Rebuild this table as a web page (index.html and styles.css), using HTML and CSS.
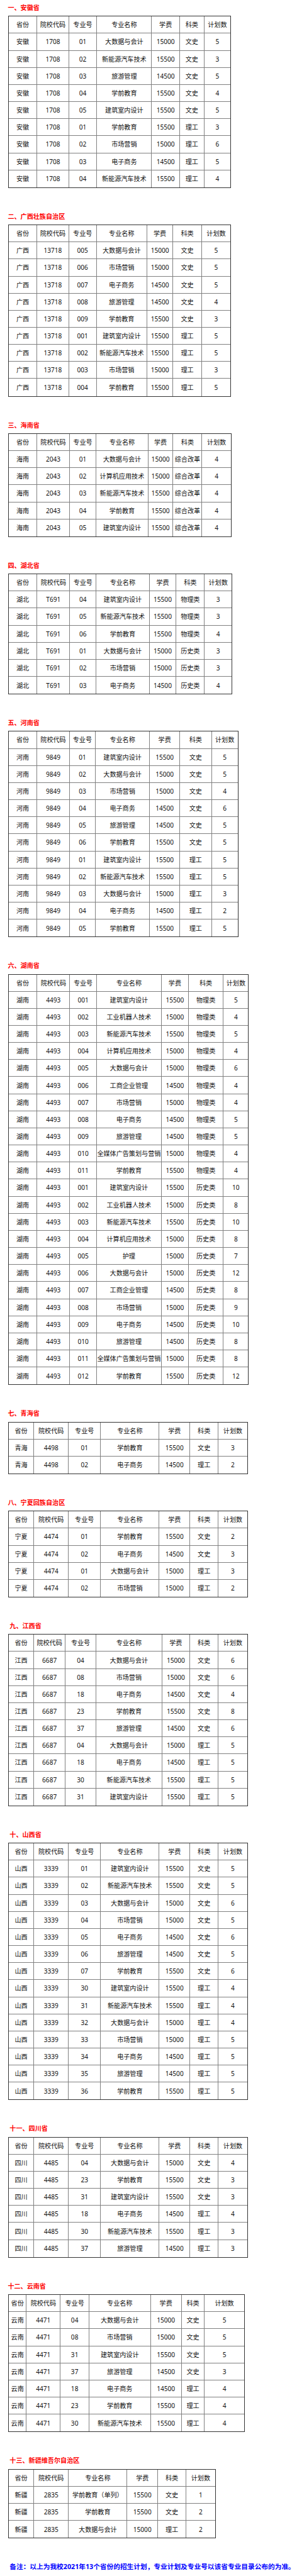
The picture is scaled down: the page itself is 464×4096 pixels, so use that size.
FILE: index.html
```html
<!DOCTYPE html>
<html lang="zh-CN">
<head>
<meta charset="utf-8">
<title>2021年招生计划</title>
<link rel="stylesheet" href="styles.css">
</head>
<body>

<section class="section">
<h2 class="title">一、安徽省</h2>
<table class="plan tA">
<colgroup><col><col><col><col><col><col><col></colgroup>
<thead><tr><th>省份</th><th>院校代码</th><th>专业号</th><th>专业名称</th><th>学费</th><th>科类</th><th>计划数</th></tr></thead>
<tbody>
<tr><td>安徽</td><td>1708</td><td>01</td><td>大数据与会计</td><td>15000</td><td>文史</td><td>5</td></tr>
<tr><td>安徽</td><td>1708</td><td>02</td><td>新能源汽车技术</td><td>15500</td><td>文史</td><td>3</td></tr>
<tr><td>安徽</td><td>1708</td><td>03</td><td>旅游管理</td><td>14500</td><td>文史</td><td>5</td></tr>
<tr><td>安徽</td><td>1708</td><td>04</td><td>学前教育</td><td>15500</td><td>文史</td><td>4</td></tr>
<tr><td>安徽</td><td>1708</td><td>05</td><td>建筑室内设计</td><td>15500</td><td>文史</td><td>5</td></tr>
<tr><td>安徽</td><td>1708</td><td>01</td><td>学前教育</td><td>15500</td><td>理工</td><td>3</td></tr>
<tr><td>安徽</td><td>1708</td><td>02</td><td>市场营销</td><td>15000</td><td>理工</td><td>6</td></tr>
<tr><td>安徽</td><td>1708</td><td>03</td><td>电子商务</td><td>14500</td><td>理工</td><td>5</td></tr>
<tr><td>安徽</td><td>1708</td><td>04</td><td>新能源汽车技术</td><td>15500</td><td>理工</td><td>4</td></tr>
</tbody>
</table>
</section>

<section class="section">
<h2 class="title">二、广西壮族自治区</h2>
<table class="plan tB">
<colgroup><col><col><col><col><col><col><col></colgroup>
<thead><tr><th>省份</th><th>院校代码</th><th>专业号</th><th>专业名称</th><th>学费</th><th>科类</th><th>计划数</th></tr></thead>
<tbody>
<tr><td>广西</td><td>13718</td><td>005</td><td>大数据与会计</td><td>15000</td><td>文史</td><td>5</td></tr>
<tr><td>广西</td><td>13718</td><td>006</td><td>市场营销</td><td>15000</td><td>文史</td><td>5</td></tr>
<tr><td>广西</td><td>13718</td><td>007</td><td>电子商务</td><td>14500</td><td>文史</td><td>5</td></tr>
<tr><td>广西</td><td>13718</td><td>008</td><td>旅游管理</td><td>14500</td><td>文史</td><td>4</td></tr>
<tr><td>广西</td><td>13718</td><td>009</td><td>学前教育</td><td>15500</td><td>文史</td><td>3</td></tr>
<tr><td>广西</td><td>13718</td><td>001</td><td>建筑室内设计</td><td>15500</td><td>理工</td><td>5</td></tr>
<tr><td>广西</td><td>13718</td><td>002</td><td>新能源汽车技术</td><td>15500</td><td>理工</td><td>5</td></tr>
<tr><td>广西</td><td>13718</td><td>003</td><td>市场营销</td><td>15000</td><td>理工</td><td>3</td></tr>
<tr><td>广西</td><td>13718</td><td>004</td><td>学前教育</td><td>15500</td><td>理工</td><td>5</td></tr>
</tbody>
</table>
</section>

<section class="section">
<h2 class="title">三、海南省</h2>
<table class="plan tC">
<colgroup><col><col><col><col><col><col><col></colgroup>
<thead><tr><th>省份</th><th>院校代码</th><th>专业号</th><th>专业名称</th><th>学费</th><th>科类</th><th>计划数</th></tr></thead>
<tbody>
<tr><td>海南</td><td>2043</td><td>01</td><td>大数据与会计</td><td>15000</td><td>综合改革</td><td>4</td></tr>
<tr><td>海南</td><td>2043</td><td>02</td><td>计算机应用技术</td><td>15000</td><td>综合改革</td><td>4</td></tr>
<tr><td>海南</td><td>2043</td><td>03</td><td>新能源汽车技术</td><td>15500</td><td>综合改革</td><td>4</td></tr>
<tr><td>海南</td><td>2043</td><td>04</td><td>学前教育</td><td>15500</td><td>综合改革</td><td>4</td></tr>
<tr><td>海南</td><td>2043</td><td>05</td><td>建筑室内设计</td><td>15500</td><td>综合改革</td><td>4</td></tr>
</tbody>
</table>
</section>

<section class="section">
<h2 class="title">四、湖北省</h2>
<table class="plan tD">
<colgroup><col><col><col><col><col><col><col></colgroup>
<thead><tr><th>省份</th><th>院校代码</th><th>专业号</th><th>专业名称</th><th>学费</th><th>科类</th><th>计划数</th></tr></thead>
<tbody>
<tr><td>湖北</td><td>T691</td><td>04</td><td>建筑室内设计</td><td>15500</td><td>物理类</td><td>3</td></tr>
<tr><td>湖北</td><td>T691</td><td>05</td><td>新能源汽车技术</td><td>15500</td><td>物理类</td><td>3</td></tr>
<tr><td>湖北</td><td>T691</td><td>06</td><td>学前教育</td><td>15500</td><td>物理类</td><td>4</td></tr>
<tr><td>湖北</td><td>T691</td><td>01</td><td>大数据与会计</td><td>15000</td><td>历史类</td><td>3</td></tr>
<tr><td>湖北</td><td>T691</td><td>02</td><td>市场营销</td><td>15000</td><td>历史类</td><td>3</td></tr>
<tr><td>湖北</td><td>T691</td><td>03</td><td>电子商务</td><td>14500</td><td>历史类</td><td>4</td></tr>
</tbody>
</table>
</section>

<section class="section">
<h2 class="title">五、河南省</h2>
<table class="plan tE">
<colgroup><col><col><col><col><col><col><col></colgroup>
<thead><tr><th>省份</th><th>院校代码</th><th>专业号</th><th>专业名称</th><th>学费</th><th>科类</th><th>计划数</th></tr></thead>
<tbody>
<tr><td>河南</td><td>9849</td><td>01</td><td>建筑室内设计</td><td>15500</td><td>文史</td><td>5</td></tr>
<tr><td>河南</td><td>9849</td><td>02</td><td>大数据与会计</td><td>15000</td><td>文史</td><td>5</td></tr>
<tr><td>河南</td><td>9849</td><td>03</td><td>市场营销</td><td>15000</td><td>文史</td><td>4</td></tr>
<tr><td>河南</td><td>9849</td><td>04</td><td>电子商务</td><td>14500</td><td>文史</td><td>6</td></tr>
<tr><td>河南</td><td>9849</td><td>05</td><td>旅游管理</td><td>14500</td><td>文史</td><td>5</td></tr>
<tr><td>河南</td><td>9849</td><td>06</td><td>学前教育</td><td>15500</td><td>文史</td><td>5</td></tr>
<tr><td>河南</td><td>9849</td><td>01</td><td>建筑室内设计</td><td>15500</td><td>理工</td><td>5</td></tr>
<tr><td>河南</td><td>9849</td><td>02</td><td>新能源汽车技术</td><td>15500</td><td>理工</td><td>5</td></tr>
<tr><td>河南</td><td>9849</td><td>03</td><td>大数据与会计</td><td>15000</td><td>理工</td><td>3</td></tr>
<tr><td>河南</td><td>9849</td><td>04</td><td>电子商务</td><td>14500</td><td>理工</td><td>2</td></tr>
<tr><td>河南</td><td>9849</td><td>05</td><td>学前教育</td><td>15500</td><td>理工</td><td>5</td></tr>
</tbody>
</table>
</section>

<section class="section">
<h2 class="title">六、湖南省</h2>
<table class="plan tF">
<colgroup><col><col><col><col><col><col><col></colgroup>
<thead><tr><th>省份</th><th>院校代码</th><th>专业号</th><th>专业名称</th><th>学费</th><th>科类</th><th>计划数</th></tr></thead>
<tbody>
<tr><td>湖南</td><td>4493</td><td>001</td><td>建筑室内设计</td><td>15500</td><td>物理类</td><td>5</td></tr>
<tr><td>湖南</td><td>4493</td><td>002</td><td>工业机器人技术</td><td>15000</td><td>物理类</td><td>4</td></tr>
<tr><td>湖南</td><td>4493</td><td>003</td><td>新能源汽车技术</td><td>15500</td><td>物理类</td><td>5</td></tr>
<tr><td>湖南</td><td>4493</td><td>004</td><td>计算机应用技术</td><td>15000</td><td>物理类</td><td>4</td></tr>
<tr><td>湖南</td><td>4493</td><td>005</td><td>大数据与会计</td><td>15000</td><td>物理类</td><td>6</td></tr>
<tr><td>湖南</td><td>4493</td><td>006</td><td>工商企业管理</td><td>14500</td><td>物理类</td><td>4</td></tr>
<tr><td>湖南</td><td>4493</td><td>007</td><td>市场营销</td><td>15000</td><td>物理类</td><td>4</td></tr>
<tr><td>湖南</td><td>4493</td><td>008</td><td>电子商务</td><td>14500</td><td>物理类</td><td>5</td></tr>
<tr><td>湖南</td><td>4493</td><td>009</td><td>旅游管理</td><td>14500</td><td>物理类</td><td>5</td></tr>
<tr><td>湖南</td><td>4493</td><td>010</td><td>全媒体广告策划与营销</td><td>15000</td><td>物理类</td><td>4</td></tr>
<tr><td>湖南</td><td>4493</td><td>011</td><td>学前教育</td><td>15500</td><td>物理类</td><td>4</td></tr>
<tr><td>湖南</td><td>4493</td><td>001</td><td>建筑室内设计</td><td>15500</td><td>历史类</td><td>10</td></tr>
<tr><td>湖南</td><td>4493</td><td>002</td><td>工业机器人技术</td><td>15000</td><td>历史类</td><td>8</td></tr>
<tr><td>湖南</td><td>4493</td><td>003</td><td>新能源汽车技术</td><td>15500</td><td>历史类</td><td>10</td></tr>
<tr><td>湖南</td><td>4493</td><td>004</td><td>计算机应用技术</td><td>15000</td><td>历史类</td><td>8</td></tr>
<tr><td>湖南</td><td>4493</td><td>005</td><td>护理</td><td>15000</td><td>历史类</td><td>7</td></tr>
<tr><td>湖南</td><td>4493</td><td>006</td><td>大数据与会计</td><td>15000</td><td>历史类</td><td>12</td></tr>
<tr><td>湖南</td><td>4493</td><td>007</td><td>工商企业管理</td><td>14500</td><td>历史类</td><td>8</td></tr>
<tr><td>湖南</td><td>4493</td><td>008</td><td>市场营销</td><td>15000</td><td>历史类</td><td>9</td></tr>
<tr><td>湖南</td><td>4493</td><td>009</td><td>电子商务</td><td>14500</td><td>历史类</td><td>10</td></tr>
<tr><td>湖南</td><td>4493</td><td>010</td><td>旅游管理</td><td>14500</td><td>历史类</td><td>8</td></tr>
<tr><td>湖南</td><td>4493</td><td>011</td><td>全媒体广告策划与营销</td><td>15000</td><td>历史类</td><td>8</td></tr>
<tr><td>湖南</td><td>4493</td><td>012</td><td>学前教育</td><td>15500</td><td>历史类</td><td>12</td></tr>
</tbody>
</table>
</section>

<section class="section">
<h2 class="title">七、青海省</h2>
<table class="plan tG">
<colgroup><col><col><col><col><col><col><col></colgroup>
<thead><tr><th>省份</th><th>院校代码</th><th>专业号</th><th>专业名称</th><th>学费</th><th>科类</th><th>计划数</th></tr></thead>
<tbody>
<tr><td>青海</td><td>4498</td><td>01</td><td>学前教育</td><td>15500</td><td>文史</td><td>3</td></tr>
<tr><td>青海</td><td>4498</td><td>02</td><td>电子商务</td><td>14500</td><td>理工</td><td>2</td></tr>
</tbody>
</table>
</section>

<section class="section">
<h2 class="title">八、宁夏回族自治区</h2>
<table class="plan tG">
<colgroup><col><col><col><col><col><col><col></colgroup>
<thead><tr><th>省份</th><th>院校代码</th><th>专业号</th><th>专业名称</th><th>学费</th><th>科类</th><th>计划数</th></tr></thead>
<tbody>
<tr><td>宁夏</td><td>4474</td><td>01</td><td>学前教育</td><td>15500</td><td>文史</td><td>2</td></tr>
<tr><td>宁夏</td><td>4474</td><td>02</td><td>电子商务</td><td>14500</td><td>文史</td><td>3</td></tr>
<tr><td>宁夏</td><td>4474</td><td>01</td><td>大数据与会计</td><td>15000</td><td>理工</td><td>3</td></tr>
<tr><td>宁夏</td><td>4474</td><td>02</td><td>市场营销</td><td>15000</td><td>理工</td><td>2</td></tr>
</tbody>
</table>
</section>

<section class="section">
<h2 class="title indent">九、江西省</h2>
<table class="plan tH">
<colgroup><col><col><col><col><col><col><col></colgroup>
<thead><tr><th>省份</th><th>院校代码</th><th>专业号</th><th>专业名称</th><th>学费</th><th>科类</th><th>计划数</th></tr></thead>
<tbody>
<tr><td>江西</td><td>6687</td><td>04</td><td>大数据与会计</td><td>15000</td><td>文史</td><td>6</td></tr>
<tr><td>江西</td><td>6687</td><td>08</td><td>市场营销</td><td>15000</td><td>文史</td><td>6</td></tr>
<tr><td>江西</td><td>6687</td><td>18</td><td>电子商务</td><td>14500</td><td>文史</td><td>4</td></tr>
<tr><td>江西</td><td>6687</td><td>23</td><td>学前教育</td><td>15500</td><td>文史</td><td>8</td></tr>
<tr><td>江西</td><td>6687</td><td>37</td><td>旅游管理</td><td>14500</td><td>文史</td><td>6</td></tr>
<tr><td>江西</td><td>6687</td><td>04</td><td>大数据与会计</td><td>15000</td><td>理工</td><td>5</td></tr>
<tr><td>江西</td><td>6687</td><td>18</td><td>电子商务</td><td>14500</td><td>理工</td><td>5</td></tr>
<tr><td>江西</td><td>6687</td><td>30</td><td>新能源汽车技术</td><td>15500</td><td>理工</td><td>5</td></tr>
<tr><td>江西</td><td>6687</td><td>31</td><td>建筑室内设计</td><td>15500</td><td>理工</td><td>5</td></tr>
</tbody>
</table>
</section>

<section class="section">
<h2 class="title indent">十、山西省</h2>
<table class="plan tG">
<colgroup><col><col><col><col><col><col><col></colgroup>
<thead><tr><th>省份</th><th>院校代码</th><th>专业号</th><th>专业名称</th><th>学费</th><th>科类</th><th>计划数</th></tr></thead>
<tbody>
<tr><td>山西</td><td>3339</td><td>01</td><td>建筑室内设计</td><td>15500</td><td>文史</td><td>5</td></tr>
<tr><td>山西</td><td>3339</td><td>02</td><td>新能源汽车技术</td><td>15500</td><td>文史</td><td>5</td></tr>
<tr><td>山西</td><td>3339</td><td>03</td><td>大数据与会计</td><td>15000</td><td>文史</td><td>6</td></tr>
<tr><td>山西</td><td>3339</td><td>04</td><td>市场营销</td><td>15000</td><td>文史</td><td>5</td></tr>
<tr><td>山西</td><td>3339</td><td>05</td><td>电子商务</td><td>14500</td><td>文史</td><td>6</td></tr>
<tr><td>山西</td><td>3339</td><td>06</td><td>旅游管理</td><td>14500</td><td>文史</td><td>5</td></tr>
<tr><td>山西</td><td>3339</td><td>07</td><td>学前教育</td><td>15500</td><td>文史</td><td>6</td></tr>
<tr><td>山西</td><td>3339</td><td>30</td><td>建筑室内设计</td><td>15500</td><td>理工</td><td>4</td></tr>
<tr><td>山西</td><td>3339</td><td>31</td><td>新能源汽车技术</td><td>15500</td><td>理工</td><td>4</td></tr>
<tr><td>山西</td><td>3339</td><td>32</td><td>大数据与会计</td><td>15000</td><td>理工</td><td>4</td></tr>
<tr><td>山西</td><td>3339</td><td>33</td><td>市场营销</td><td>15000</td><td>理工</td><td>5</td></tr>
<tr><td>山西</td><td>3339</td><td>34</td><td>电子商务</td><td>14500</td><td>理工</td><td>5</td></tr>
<tr><td>山西</td><td>3339</td><td>35</td><td>旅游管理</td><td>14500</td><td>理工</td><td>5</td></tr>
<tr><td>山西</td><td>3339</td><td>36</td><td>学前教育</td><td>15500</td><td>理工</td><td>5</td></tr>
</tbody>
</table>
</section>

<section class="section">
<h2 class="title indent">十一、四川省</h2>
<table class="plan tG">
<colgroup><col><col><col><col><col><col><col></colgroup>
<thead><tr><th>省份</th><th>院校代码</th><th>专业号</th><th>专业名称</th><th>学费</th><th>科类</th><th>计划数</th></tr></thead>
<tbody>
<tr><td>四川</td><td>4485</td><td>04</td><td>大数据与会计</td><td>15000</td><td>文史</td><td>4</td></tr>
<tr><td>四川</td><td>4485</td><td>23</td><td>学前教育</td><td>15500</td><td>文史</td><td>3</td></tr>
<tr><td>四川</td><td>4485</td><td>31</td><td>建筑室内设计</td><td>15500</td><td>文史</td><td>3</td></tr>
<tr><td>四川</td><td>4485</td><td>18</td><td>电子商务</td><td>14500</td><td>理工</td><td>4</td></tr>
<tr><td>四川</td><td>4485</td><td>30</td><td>新能源汽车技术</td><td>15500</td><td>理工</td><td>3</td></tr>
<tr><td>四川</td><td>4485</td><td>37</td><td>旅游管理</td><td>14500</td><td>理工</td><td>3</td></tr>
</tbody>
</table>
</section>

<section class="section">
<h2 class="title">十二、云南省</h2>
<table class="plan tI">
<colgroup><col><col><col><col><col><col><col></colgroup>
<thead><tr><th>省份</th><th>院校代码</th><th>专业号</th><th>专业名称</th><th>学费</th><th>科类</th><th>计划数</th></tr></thead>
<tbody>
<tr><td>云南</td><td>4471</td><td>04</td><td>大数据与会计</td><td>15000</td><td>文史</td><td>5</td></tr>
<tr><td>云南</td><td>4471</td><td>08</td><td>市场营销</td><td>15000</td><td>文史</td><td>5</td></tr>
<tr><td>云南</td><td>4471</td><td>31</td><td>建筑室内设计</td><td>15500</td><td>文史</td><td>5</td></tr>
<tr><td>云南</td><td>4471</td><td>37</td><td>旅游管理</td><td>14500</td><td>文史</td><td>3</td></tr>
<tr><td>云南</td><td>4471</td><td>18</td><td>电子商务</td><td>14500</td><td>理工</td><td>4</td></tr>
<tr><td>云南</td><td>4471</td><td>23</td><td>学前教育</td><td>15500</td><td>理工</td><td>4</td></tr>
<tr><td>云南</td><td>4471</td><td>30</td><td>新能源汽车技术</td><td>15500</td><td>理工</td><td>4</td></tr>
</tbody>
</table>
</section>

<section class="section">
<h2 class="title indent">十三、新疆维吾尔自治区</h2>
<table class="plan tJ">
<colgroup><col><col><col><col><col><col></colgroup>
<thead><tr><th>省份</th><th>院校代码</th><th>专业名称</th><th>学费</th><th>科类</th><th>计划数</th></tr></thead>
<tbody>
<tr><td>新疆</td><td>2835</td><td>学前教育（单列）</td><td>15500</td><td>文史</td><td>1</td></tr>
<tr><td>新疆</td><td>2835</td><td>学前教育</td><td>15500</td><td>文史</td><td>2</td></tr>
<tr><td>新疆</td><td>2835</td><td>大数据与会计</td><td>15000</td><td>理工</td><td>2</td></tr>
</tbody>
</table>
</section>

<p class="note">备注：以上为我校2021年13个省份的招生计划，专业计划及专业号以该省专业目录公布的为准。</p>

</body>
</html>
```

FILE: styles.css
```css
* { box-sizing: border-box; }

html, body {
  margin: 0;
  padding: 0;
  background: #ffffff;
}

body {
  width: 464px;
  padding: 5px 0 0 13px;
  font-family: "Noto Sans", "Noto Sans CJK SC", sans-serif;
  font-size: 10.1px;
  color: #111111;
}

.section + .section { margin-top: 38px; }

.title {
  margin: 0 0 6.25px -0.6px;
  height: 14px;
  line-height: 14px;
  font-size: 10.1px;
  font-weight: bold;
  color: #ff0000;
  white-space: nowrap;
}
.title.indent { margin-left: 2.3px; }

.plan {
  border-collapse: separate;
  border-spacing: 0;
  table-layout: fixed;
  border: 1px solid #333333;
}

.plan th,
.plan td {
  height: 27.165px;
  padding: 0;
  text-align: center;
  vertical-align: middle;
  white-space: nowrap;
  overflow: hidden;
  font-weight: normal;
  font-size: 10.1px;
  line-height: 14px;
  color: #111111;
  border-right: 1px solid #808080;
  border-bottom: 1px solid #808080;
}
.plan tr > :last-child { border-right: 0; }
.plan tbody tr:last-child > * { border-bottom: 0; }

/* 安徽 */
.tA { width: 352.2px; }
.tA col:nth-child(1) { width: 45.2px; }
.tA col:nth-child(2) { width: 50.5px; }
.tA col:nth-child(3) { width: 44.6px; }
.tA col:nth-child(4) { width: 87.1px; }
.tA col:nth-child(5) { width: 44.6px; }
.tA col:nth-child(6) { width: 38.7px; }
.tA col:nth-child(7) { width: 41.4px; }

/* 广西 */
.tB { width: 352.2px; }
.tB col:nth-child(1) { width: 45.2px; }
.tB col:nth-child(2) { width: 50.5px; }
.tB col:nth-child(3) { width: 44.0px; }
.tB col:nth-child(4) { width: 80.1px; }
.tB col:nth-child(5) { width: 41.6px; }
.tB col:nth-child(6) { width: 45.5px; }
.tB col:nth-child(7) { width: 45.2px; }

/* 海南 */
.tC { width: 352.7px; }
.tC col:nth-child(1) { width: 45.2px; }
.tC col:nth-child(2) { width: 51.7px; }
.tC col:nth-child(3) { width: 42.2px; }
.tC col:nth-child(4) { width: 82.7px; }
.tC col:nth-child(5) { width: 39.6px; }
.tC col:nth-child(6) { width: 46.1px; }
.tC col:nth-child(7) { width: 45.2px; }

/* 湖北 */
.tD { width: 354.2px; }
.tD col:nth-child(1) { width: 45.2px; }
.tD col:nth-child(2) { width: 52.3px; }
.tD col:nth-child(3) { width: 41.6px; }
.tD col:nth-child(4) { width: 84.5px; }
.tD col:nth-child(5) { width: 42.8px; }
.tD col:nth-child(6) { width: 44.9px; }
.tD col:nth-child(7) { width: 42.8px; }

/* 河南 */
.tE { width: 363.7px; }
.tE col:nth-child(1) { width: 45.2px; }
.tE col:nth-child(2) { width: 51.7px; }
.tE col:nth-child(3) { width: 41.1px; }
.tE col:nth-child(4) { width: 86.3px; }
.tE col:nth-child(5) { width: 47.8px; }
.tE col:nth-child(6) { width: 50.5px; }
.tE col:nth-child(7) { width: 41.1px; }

/* 湖南 */
.tF { width: 380.5px; }
.tF col:nth-child(1) { width: 45.2px; }
.tF col:nth-child(2) { width: 52.3px; }
.tF col:nth-child(3) { width: 42.2px; }
.tF col:nth-child(4) { width: 103.4px; }
.tF col:nth-child(5) { width: 42.8px; }
.tF col:nth-child(6) { width: 55.5px; }
.tF col:nth-child(7) { width: 39.0px; }

/* 青海 / 宁夏 / 山西 / 四川 */
.tG { width: 378.8px; }
.tG col:nth-child(1) { width: 40.2px; }
.tG col:nth-child(2) { width: 55.0px; }
.tG col:nth-child(3) { width: 51.1px; }
.tG col:nth-child(4) { width: 93.1px; }
.tG col:nth-child(5) { width: 48.7px; }
.tG col:nth-child(6) { width: 45.2px; }
.tG col:nth-child(7) { width: 45.5px; }

/* 江西 */
.tH { width: 378.7px; }
.tH col:nth-child(1) { width: 40.2px; }
.tH col:nth-child(2) { width: 49.9px; }
.tH col:nth-child(3) { width: 49.0px; }
.tH col:nth-child(4) { width: 104.6px; }
.tH col:nth-child(5) { width: 44.3px; }
.tH col:nth-child(6) { width: 45.2px; }
.tH col:nth-child(7) { width: 45.5px; }

/* 云南 */
.tI { width: 373.7px; }
.tI col:nth-child(1) { width: 28.3px; }
.tI col:nth-child(2) { width: 54.1px; }
.tI col:nth-child(3) { width: 45.5px; }
.tI col:nth-child(4) { width: 97.8px; }
.tI col:nth-child(5) { width: 49.0px; }
.tI col:nth-child(6) { width: 36.7px; }
.tI col:nth-child(7) { width: 62.3px; }

/* 新疆 */
.tJ { width: 327.7px; }
.tJ col:nth-child(1) { width: 40.2px; }
.tJ col:nth-child(2) { width: 55.0px; }
.tJ col:nth-child(3) { width: 93.3px; }
.tJ col:nth-child(4) { width: 48.5px; }
.tJ col:nth-child(5) { width: 45.2px; }
.tJ col:nth-child(6) { width: 45.5px; }

.note {
  margin: 38px 0 0 2.3px;
  height: 14px;
  line-height: 14px;
  font-size: 10.7px;
  font-weight: bold;
  color: #0000ff;
  white-space: nowrap;
}
```
